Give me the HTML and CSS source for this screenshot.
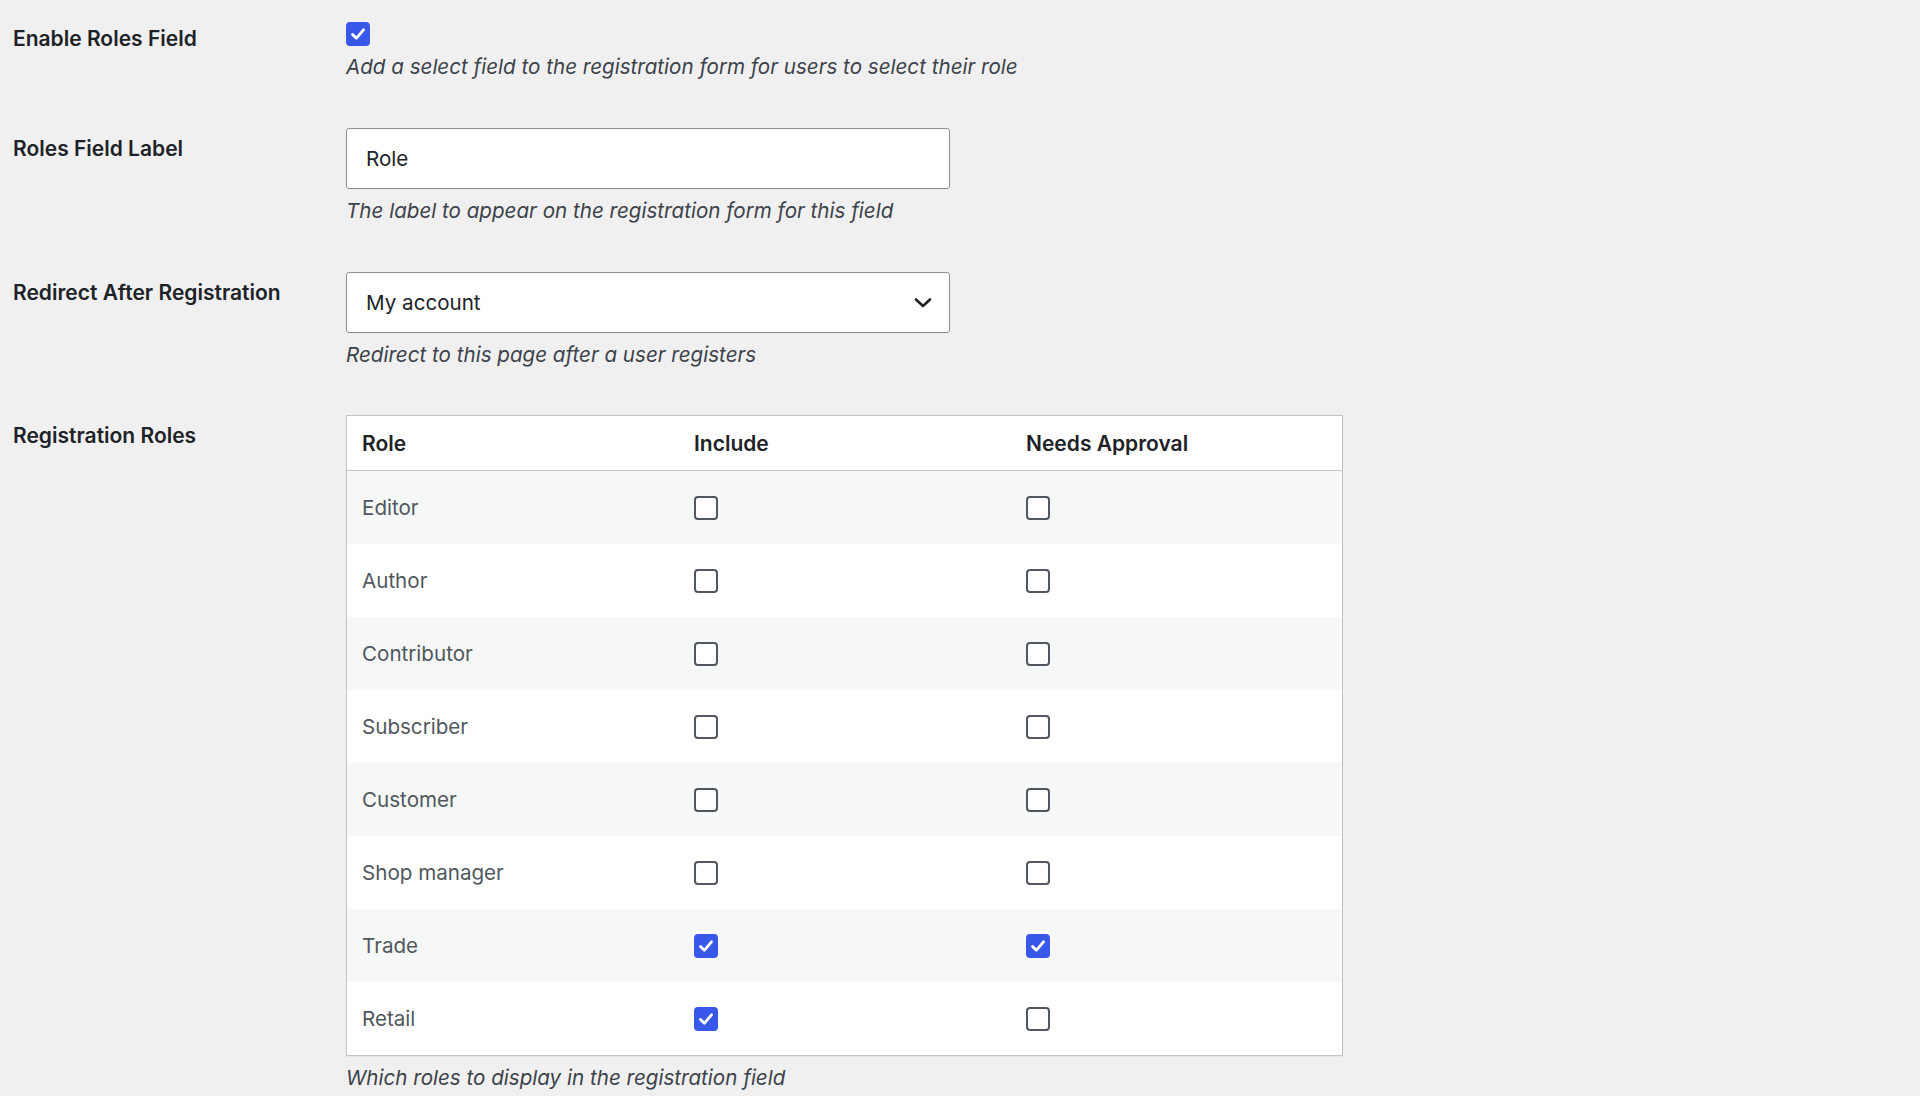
FILE: index.html
```html
<!DOCTYPE html>
<html lang="en">
<head>
<meta charset="utf-8">
<title>Registration Settings</title>
<link rel="stylesheet" href="styles.css">
</head>
<body>
<div class="form">
  <div class="field field-first">
    <div class="label label-first">Enable Roles Field</div>
    <div class="control">
      <span class="cb checked"><svg viewBox="0 0 24 24" width="24" height="24"><path d="M6.5 12.5 L10.3 16.3 L17.5 7.8" fill="none" stroke="#fff" stroke-width="2.8" stroke-linecap="round" stroke-linejoin="round"/></svg></span>
      <p class="desc desc-first">Add a select field to the registration form for users to select their role</p>
    </div>
  </div>

  <div class="field">
    <div class="label">Roles Field Label</div>
    <div class="control">
      <div class="input">Role</div>
      <p class="desc">The label to appear on the registration form for this field</p>
    </div>
  </div>

  <div class="field">
    <div class="label">Redirect After Registration</div>
    <div class="control">
      <div class="input select"><span>My account</span><svg class="chev" viewBox="0 0 20 12" width="20" height="12"><path d="M3 2.5 L10 9 L17 2.5" fill="none" stroke="#1d2327" stroke-width="2.6" stroke-linecap="round" stroke-linejoin="round"/></svg></div>
      <p class="desc">Redirect to this page after a user registers</p>
    </div>
  </div>

  <div class="field field-table">
    <div class="label">Registration Roles</div>
    <div class="control">
      <div class="table">
        <div class="tr thead"><div class="td">Role</div><div class="td">Include</div><div class="td">Needs Approval</div></div>
        <div class="tr alt"><div class="td">Editor</div><div class="td"><span class="cb"></span></div><div class="td"><span class="cb"></span></div></div>
        <div class="tr"><div class="td">Author</div><div class="td"><span class="cb"></span></div><div class="td"><span class="cb"></span></div></div>
        <div class="tr alt"><div class="td">Contributor</div><div class="td"><span class="cb"></span></div><div class="td"><span class="cb"></span></div></div>
        <div class="tr"><div class="td">Subscriber</div><div class="td"><span class="cb"></span></div><div class="td"><span class="cb"></span></div></div>
        <div class="tr alt"><div class="td">Customer</div><div class="td"><span class="cb"></span></div><div class="td"><span class="cb"></span></div></div>
        <div class="tr"><div class="td">Shop manager</div><div class="td"><span class="cb"></span></div><div class="td"><span class="cb"></span></div></div>
        <div class="tr alt"><div class="td">Trade</div><div class="td"><span class="cb checked"><svg viewBox="0 0 24 24" width="24" height="24"><path d="M6.5 12.5 L10.3 16.3 L17.5 7.8" fill="none" stroke="#fff" stroke-width="2.8" stroke-linecap="round" stroke-linejoin="round"/></svg></span></div><div class="td"><span class="cb checked"><svg viewBox="0 0 24 24" width="24" height="24"><path d="M6.5 12.5 L10.3 16.3 L17.5 7.8" fill="none" stroke="#fff" stroke-width="2.8" stroke-linecap="round" stroke-linejoin="round"/></svg></span></div></div>
        <div class="tr"><div class="td">Retail</div><div class="td"><span class="cb checked"><svg viewBox="0 0 24 24" width="24" height="24"><path d="M6.5 12.5 L10.3 16.3 L17.5 7.8" fill="none" stroke="#fff" stroke-width="2.8" stroke-linecap="round" stroke-linejoin="round"/></svg></span></div><div class="td"><span class="cb"></span></div></div>
      </div>
      <p class="desc">Which roles to display in the registration field</p>
    </div>
  </div>
</div>
</body>
</html>
```

FILE: styles.css
```css
html, body {
  margin: 0;
  padding: 0;
  background: #f0f0f1;
  font-family: Inter, "Noto Sans", "Liberation Sans", sans-serif;
  font-size: 20.6px;
  color: #1d2327;
}

.form {
  padding: 22px 0 0 13px;
  display: flex;
  flex-direction: column;
  gap: 49px;
}

.field {
  display: grid;
  grid-template-columns: 333px 997px;
  align-items: start;
}

.field-table {
  margin-top: -1px;
}

.label {
  font-size: 21px;
  font-weight: 600;
  line-height: 24px;
  margin-top: 9px;
  color: #1d2327;
}

.label-first {
  margin-top: 5px;
}

.control {
  display: flex;
  flex-direction: column;
  align-items: flex-start;
}

.desc {
  margin: 10px 0 0 0;
  font-style: italic;
  line-height: 24px;
  color: #3c434a;
}

.desc-first {
  margin-top: 9px;
}

.input {
  box-sizing: border-box;
  width: 604px;
  height: 61px;
  border: 1px solid #8c8f94;
  border-radius: 3px;
  background: #fff;
  padding: 0 19px;
  display: flex;
  align-items: center;
  color: #1d2327;
  box-shadow: 0 1px 1px rgba(0,0,0,0.04);
}

.select {
  justify-content: space-between;
  padding-right: 16px;
}

.chev {
  display: block;
}

.cb {
  box-sizing: border-box;
  width: 24px;
  height: 24px;
  border: 2px solid #50575e;
  border-radius: 4px;
  background: #fff;
  display: inline-flex;
  align-items: center;
  justify-content: center;
}

.cb.checked {
  background: #3858e9;
  border-color: #3858e9;
}

.cb svg {
  display: block;
  flex: none;
}

.table {
  box-sizing: border-box;
  width: 997px;
  border: 1px solid #c3c4c7;
  background: #fff;
  box-shadow: 0 1px 1px rgba(0,0,0,0.04);
}

.tr {
  display: grid;
  grid-template-columns: 332px 332px 1fr;
  height: 73px;
  align-items: center;
  color: #50575e;
}

.tr.alt {
  background: #f6f7f7;
}

.thead {
  height: 55px;
  border-bottom: 1px solid #c3c4c7;
  box-sizing: border-box;
  color: #1d2327;
  font-size: 21px;
  font-weight: 600;
}

.td {
  padding-left: 15px;
  display: flex;
  align-items: center;
}
```
